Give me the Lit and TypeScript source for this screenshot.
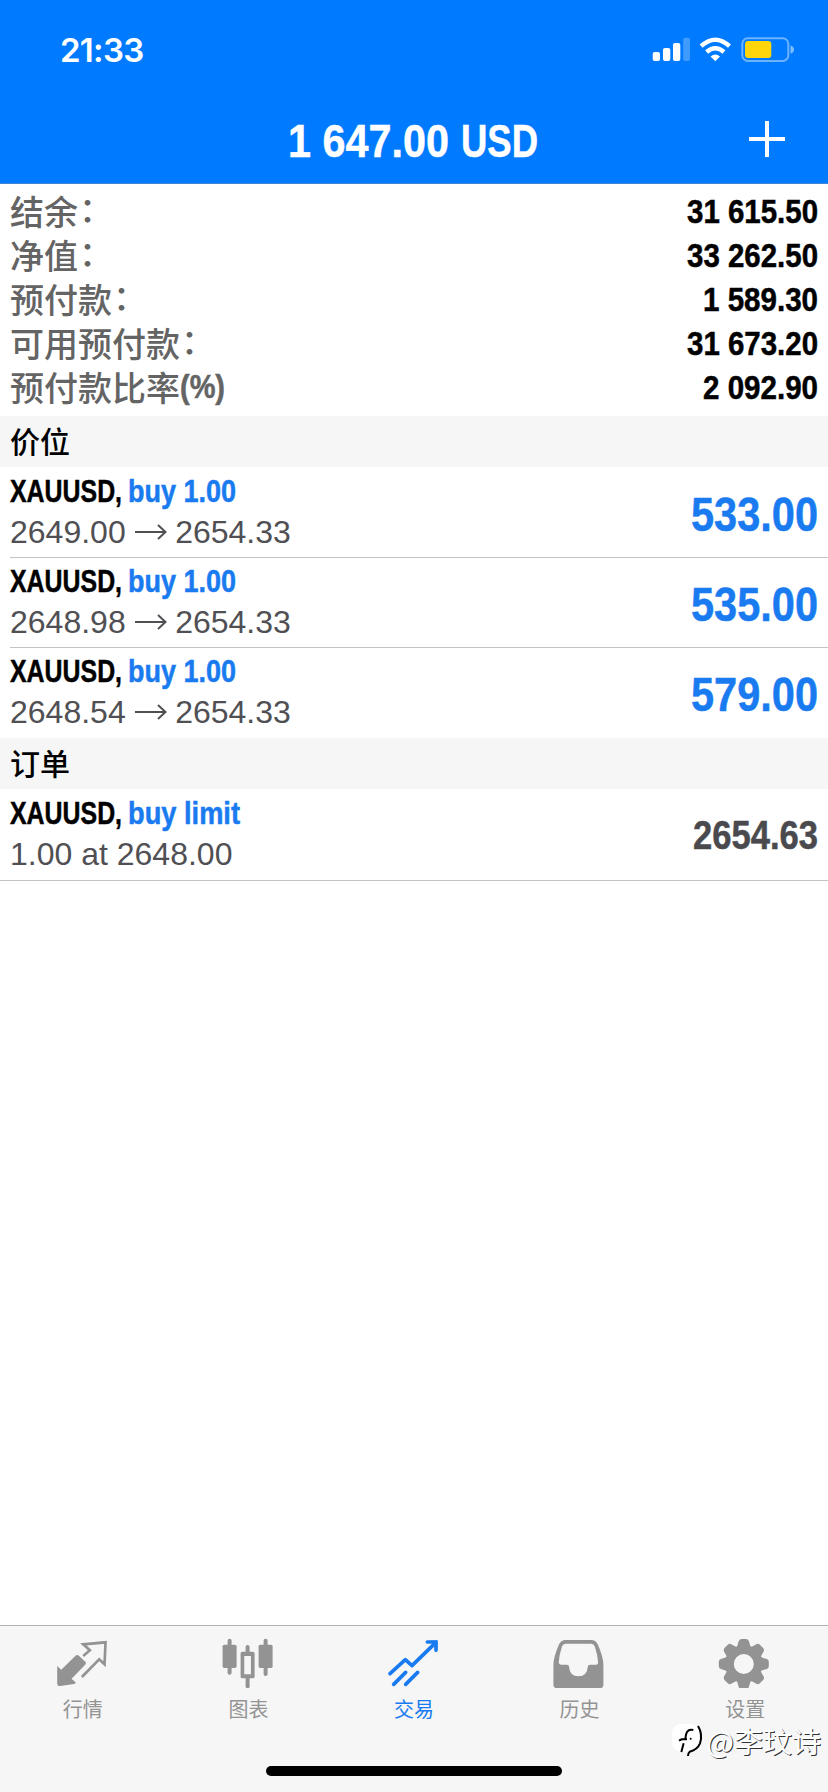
import { LitElement, html, css, svg } from "lit";
import { customElement } from "lit/decorators.js";

// Advance widths of the bold face, in em, used to condense a run to a given width.
const advance: Record<string, number> = {
  " ": 0.278, ".": 0.278, ",": 0.278, "(": 0.333, ")": 0.333, "%": 0.889,
  X: 0.667, A: 0.722, U: 0.722, S: 0.667, D: 0.722,
  b: 0.611, u: 0.611, y: 0.556, l: 0.278, i: 0.278, m: 0.889, t: 0.333,
};

const fit = (text: string, size: number, width: number) => {
  const natural = [...text].reduce((sum, ch) => sum + (advance[ch] ?? 0.556), 0) * size;
  return html`<span class="fit" style="width:${width}px;font-size:${size}px"><span class="run" style="transform:scaleX(${(width / natural).toFixed(4)})">${text}</span></span>`;
};

const summary = [
  { label: "结余", end: "：", value: "31 615.50", w: 131 },
  { label: "净值", end: "：", value: "33 262.50", w: 131 },
  { label: "预付款", end: "：", value: "1 589.30", w: 115 },
  { label: "可用预付款", end: "：", value: "31 673.20", w: 131 },
  { label: "预付款比率", end: "", value: "2 092.90", w: 115 },
];

const positions = [
  { open: "2649.00", now: "2654.33", profit: "533.00" },
  { open: "2648.98", now: "2654.33", profit: "535.00" },
  { open: "2648.54", now: "2654.33", profit: "579.00" },
];

const teeth = [0, 45, 90, 135, 180, 225, 270, 315];

const tabs = [
  {
    label: "行情",
    box: "158.4 78 180 156",
    icon: svg`
      <path fill="currentColor" d="M171 168 L183 179 L226 137 Q231 133 236 137 L256 156 Q259 160 255 164 L214 206 L226 217 Q228 221 222 222 L180 228 Q171 229 171 221 Z"/>
      <path fill="none" stroke="currentColor" stroke-width="8" d="M249 138 L269 121 L249 103 L316 97 L313 163 L297 148 L245 201"/>`,
  },
  {
    label: "图表",
    box: "655.2 78 180 156",
    icon: svg`
      <g fill="currentColor">
        <rect x="684" y="86" width="12" height="108" rx="6"/><rect x="669" y="104" width="42" height="70" rx="5"/>
        <rect x="792" y="86" width="12" height="112" rx="6"/><rect x="777" y="104" width="42" height="70" rx="5"/>
        <rect x="738" y="105" width="12" height="30" rx="6"/><rect x="738" y="196" width="12" height="39" rx="6"/>
        <path fill-rule="evenodd" d="M728 125h32q5 0 5 5v70q0 5-5 5h-32q-5 0-5-5v-70q0-5 5-5zM734 138v55h20v-55z"/>
      </g>`,
  },
  {
    label: "交易",
    box: "252 78 180 156",
    active: true,
    icon: svg`
      <g fill="none" stroke="currentColor" stroke-width="11" stroke-linecap="round" stroke-linejoin="round">
        <path d="M270 191 L316 149 L336 167 L404 101"/>
        <path d="M317 187 L281 223 M353 187 L317 223"/>
        <path d="M382 96 H408 V121"/>
      </g>
      <path fill="currentColor" d="M390 93 L413 91 L411 115 Z"/>`,
  },
  {
    label: "历史",
    box: "748.8 78 180 156",
    icon: svg`
      <path fill="currentColor" fill-rule="evenodd" d="M796 90 H872 Q886 90 892 103 Q909 142 909 165 V224 Q909 234 899 234 H770 Q759 234 759 224 V165 Q759 142 776 103 Q782 90 796 90 Z M795 101 Q788 101 785 109 Q776 136 775 157 Q775 164 782 164 H800 Q806 164 806 171 Q808 199 834 199 Q860 199 862 171 Q862 164 869 164 H888 Q893 164 893 157 Q892 136 883 109 Q880 101 873 101 Z"/>`,
  },
  {
    label: "设置",
    box: "345.6 78 180 156",
    icon: svg`
      <g fill="currentColor">
        ${teeth.map((a) => svg`<path transform="rotate(${a} 432 162)" d="M409 114 Q414 106 416 95 Q418 87 425 87 H439 Q446 87 448 95 Q450 106 455 114 Z"/>`)}
      </g>
      <circle cx="432" cy="162" r="42" fill="none" stroke="currentColor" stroke-width="24"/>`,
  },
];

@customElement("app-root")
export class AppRoot extends LitElement {
  static styles = css`
    :host {
      display: block;
      height: 1792px;
      overflow: hidden;
      position: relative;
      background: #fff;
      font-family: "Liberation Sans", "Noto Sans CJK SC", sans-serif;
    }
    * { box-sizing: border-box; }
    svg { display: block; }
    .screen { height: 100%; display: flex; flex-direction: column; }
    .fit { flex: none; display: flex; font-family: "Liberation Sans", sans-serif; font-weight: 700; line-height: 1.14; }
    .run { flex: none; white-space: pre; transform-origin: 0 50%; font-kerning: none; -webkit-text-stroke: 0.5px currentColor; }
    .top {
      height: 184px;
      background: #007aff;
      border-bottom: 1px solid #4285dc;
      color: #fff;
      display: flex;
      flex-direction: column;
    }
    .status { height: 98px; display: flex; justify-content: space-between; padding: 32px 34px 0 60px; }
    .time { font: 600 33px/36px Inter, sans-serif; letter-spacing: -0.7px; }
    .sys { margin-top: 3px; }
    .nav { height: 85px; display: grid; grid-template-columns: 1fr auto 1fr; align-items: center; padding: 0 43px 0 40px; }
    .title { display: flex; gap: 12px; padding-top: 1px; }
    .plus { justify-self: end; margin-top: -4px; }
    .summary { height: 232px; padding: 5px 10px 0; }
    .sum { height: 44px; display: flex; justify-content: space-between; align-items: center; color: #000; }
    .label { display: flex; align-items: center; color: #646464; font: 500 34px/42px "Noto Sans CJK SC", sans-serif; height: 44px; padding-bottom: 1px; }
    .colon { transform: translate(1px, -3px); }
    .section {
      height: 51px;
      padding: 0 10px;
      background: #f6f6f6;
      font: 500 30px/49px "Noto Sans CJK SC", sans-serif;
      color: #000;
    }
    .list { padding-left: 10px; }
    .row {
      height: 90px;
      padding: 5px 10px 0 0;
      display: flex;
      justify-content: space-between;
    }
    .line { border-bottom: 1px solid #c3c3c6; }
    .first { height: 91px; padding-top: 6px; }
    .order { padding: 6px 10px 0; height: 92px; border-bottom: 1px solid #c3c3c6; }
    .name { display: flex; gap: 6px; color: #000; height: 36px; }
    .buy { color: #1a7bf0; }
    .price { display: flex; align-items: center; height: 36px; margin-top: 5px; font-size: 32px; line-height: 36px; color: #505054; white-space: pre; }
    .arrow { margin: 0 8.5px 0 9px; }
    .profit { color: #1a7bf0; padding-top: 15px; }
    .quote { color: #4a4a4e; padding-top: 18px; }
    .space { flex: 1; }
    .tabs {
      height: 167px;
      border-top: 1px solid #b2b2b2;
      background: #f6f6f6;
      display: grid;
      grid-template-columns: repeat(5, 1fr);
      padding-top: 10px;
    }
    .tab { display: flex; flex-direction: column; align-items: center; color: #939393; font: 400 20px/30px "Noto Sans CJK SC", sans-serif; gap: 6px; }
    .active { color: #1a7bf0; }
    .home { position: absolute; left: 266px; bottom: 16px; width: 296px; height: 10px; border-radius: 5px; background: #000; }
    .mark {
      position: absolute;
      right: 7px;
      bottom: 34px;
      display: flex;
      align-items: center;
      gap: 2px;
      color: #fff;
      font: 400 29px/36px "Noto Sans CJK SC", sans-serif;
      text-shadow: 1px 1px 0 #333;
    }
  `;

  render() {
    return html`
      <div class="screen">
        <header class="top">
          <div class="status">
            <div class="time">21:33</div>
            <svg class="sys" width="143" height="28" viewBox="0 0 143 28">
              <g fill="#fff">
                <rect x="1.700" y="17" width="7.300" height="9" rx="2"/>
                <rect x="12" y="13" width="7.300" height="13" rx="2"/>
                <rect x="22" y="8" width="7.300" height="18" rx="2"/>
                <rect x="32.200" y="2.700" width="6.800" height="23.300" rx="2" opacity=".25"/>
                <path d="M64.300 26.300 L59.600 21.500 Q64.300 17.500 69 21.500 Z"/>
              </g>
              <g fill="none" stroke="#fff" stroke-width="4.400">
                <path d="M50.100 11.200 Q64.300 -1.800 78.500 11.200"/>
                <path d="M55.600 17 Q64.300 9.400 73 17"/>
              </g>
              <rect x="91.300" y="3.300" width="46" height="22.600" rx="5.500" fill="none" stroke="#fff" stroke-opacity=".42" stroke-width="2"/>
              <path d="M139.500 10.500 Q143 11.500 143 14.500 Q143 17.500 139.500 18.500 Z" fill="#fff" opacity=".5"/>
              <rect x="94" y="6" width="26.300" height="17" rx="3" fill="#ffd60a"/>
            </svg>
          </div>
          <div class="nav">
            <span></span>
            <div class="title">${fit("1 647.00", 47, 161)}${fit("USD", 47, 77)}</div>
            <svg class="plus" width="36" height="36" viewBox="0 0 36 36"><path d="M18 0V36M0 18H36" stroke="#fff" stroke-width="4"/></svg>
          </div>
        </header>
        <section class="summary">
          ${summary.map(
            (s) => html`<div class="sum">
              <div class="label"><span>${s.label}</span>${s.end ? html`<span class="colon">${s.end}</span>` : fit("(%)", 33, 45)}</div>
              ${fit(s.value, 34, s.w)}
            </div>`
          )}
        </section>
        <div class="section">价位</div>
        <section class="list">
          ${positions.map(
            (p, i) => html`<div class="row ${i < 2 ? "line" : ""} ${i === 0 ? "first" : ""}">
              <div>
                <div class="name">${fit("XAUUSD,", 32, 112)}<span class="buy">${fit("buy 1.00", 32, 108)}</span></div>
                <div class="price"><span>${p.open}</span><svg class="arrow" width="32" height="18" viewBox="0 0 32 18"><path d="M0 9H30M23 2L30.500 9L23 16" fill="none" stroke="currentColor" stroke-width="2"/></svg><span>${p.now}</span></div>
              </div>
              <div class="profit">${fit(p.profit, 48, 127)}</div>
            </div>`
          )}
        </section>
        <div class="section">订单</div>
        <div class="row order">
          <div>
            <div class="name">${fit("XAUUSD,", 32, 112)}<span class="buy">${fit("buy limit", 32, 112)}</span></div>
            <div class="price">1.00 at 2648.00</div>
          </div>
          <div class="quote">${fit("2654.63", 40, 125)}</div>
        </div>
        <div class="space"></div>
        <nav class="tabs">
          ${tabs.map(
            (t) => html`<div class="tab ${t.active ? "active" : ""}">
              <svg width="60" height="52" viewBox=${t.box}>${t.icon}</svg>
              <span>${t.label}</span>
            </div>`
          )}
        </nav>
      </div>
      <div class="home"></div>
      <div class="mark">
        <svg width="34" height="36" viewBox="210 348 102 108">
          <rect x="213" y="354" width="82" height="82" rx="26" fill="#fff"/>
          <path d="M291 360 Q306 384 297 412 Q290 430 266 437 Q261 441 261 450" fill="none" stroke="#000" stroke-width="6"/>
          <path d="M277 372 Q259 368 255 386 L253 398 M248 412 L241 438 M234 404 L242 400 H258" fill="none" stroke="#000" stroke-width="6"/>
          <circle cx="269" cy="398" r="3"/>
        </svg>
        <span>@李玟诗</span>
      </div>
    `;
  }
}
